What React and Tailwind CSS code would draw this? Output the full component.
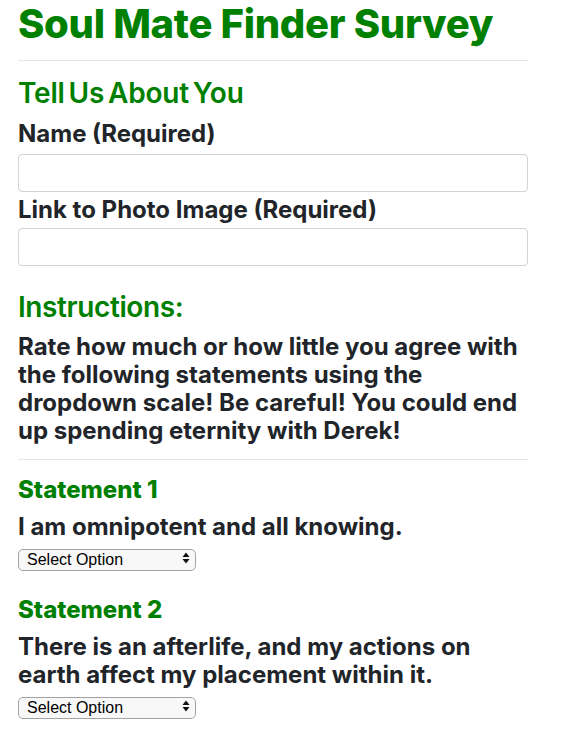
import { useState } from "react";

// Survey form page: profile inputs, instructions and the rating statements
const statements = [
  { id: 1, text: "I am omnipotent and all knowing." },
  { id: 2, text: "There is an afterlife, and my actions on earth affect my placement within it." },
];

function ScaleSelect({ value, onChange }) {
  return (
    <div className="relative w-[178px] h-[22px]">
      <select
        value={value}
        onChange={(e) => onChange(e.target.value)}
        className="appearance-none w-full h-full rounded-[5px] border border-[#a3a3a3] bg-[#f8f8f8] pl-[8px] pr-6 text-[16px] leading-[20px] text-black font-['Liberation_Sans',Arial,sans-serif] outline-none"
      >
        <option value="">Select Option</option>
        <option value="1">1 (Strongly Disagree)</option>
        <option value="2">2</option>
        <option value="3">3</option>
        <option value="4">4</option>
        <option value="5">5 (Strongly Agree)</option>
      </select>
      {/* native-looking up/down arrows */}
      <svg
        className="pointer-events-none absolute right-[6px] top-[5px]"
        width="8"
        height="12"
        viewBox="0 0 8 12"
      >
        <path d="M4 0.5 L7.5 5 L0.5 5 Z" fill="#111" />
        <path d="M4 11.5 L7.5 7 L0.5 7 Z" fill="#111" />
      </svg>
    </div>
  );
}

export default function App() {
  const [name, setName] = useState("");
  const [photo, setPhoto] = useState("");
  const [answers, setAnswers] = useState({});

  return (
    <div className="min-h-screen bg-white font-['Inter',sans-serif] text-[#212529]">
      <div className="ml-[18px] w-[510px] flex flex-col">
        <h1 className="text-[40px] leading-[48px] font-extrabold text-[#008000] tracking-[-0.3px]">
          Soul Mate Finder Survey
        </h1>
        <hr className="mt-[12px] border-0 border-t border-[#e5e5e5]" />

        {/* About you */}
        <h3 className="mt-[15px] text-[28px] leading-[34px] font-semibold text-[#008000] tracking-[-0.2px] [word-spacing:-3px]">
          Tell Us About You
        </h3>
        <h4 className="mt-[9px] text-[24px] leading-[29px] font-bold">Name (Required)</h4>
        <input
          value={name}
          onChange={(e) => setName(e.target.value)}
          className="mt-[6px] h-[38px] w-full rounded-[4px] border border-[#ced4da] px-3 text-base outline-none"
        />
        <h4 className="mt-[3px] text-[24px] leading-[29px] font-bold">
          Link to Photo Image (Required)
        </h4>
        <input
          value={photo}
          onChange={(e) => setPhoto(e.target.value)}
          className="mt-[4px] h-[38px] w-full rounded-[4px] border border-[#ced4da] px-3 text-base outline-none"
        />

        {/* Instructions */}
        <h3 className="mt-[24px] text-[28px] leading-[34px] font-semibold text-[#008000] tracking-[-0.4px]">
          Instructions:
        </h3>
        <h4 className="mt-[9px] text-[24px] leading-[28px] font-bold">
          Rate how much or how little you agree with the following statements using the
          dropdown scale! Be careful! You could end up spending eternity with Derek!
        </h4>
        <hr className="mt-[14px] border-0 border-t border-[#e5e5e5]" />

        {/* Statements */}
        {statements.map((s, i) => (
          <div key={s.id} className={i === 0 ? "mt-[15px]" : "mt-[26px]"}>
            <h5 className="text-[24px] leading-[29px] font-extrabold text-[#008000]">
              Statement {s.id}
            </h5>
            <h4 className="mt-[9px] text-[24px] leading-[28px] font-bold">{s.text}</h4>
            <div className="mt-[6px]">
              <ScaleSelect
                value={answers[s.id] || ""}
                onChange={(v) => setAnswers({ ...answers, [s.id]: v })}
              />
            </div>
          </div>
        ))}
      </div>
    </div>
  );
}
